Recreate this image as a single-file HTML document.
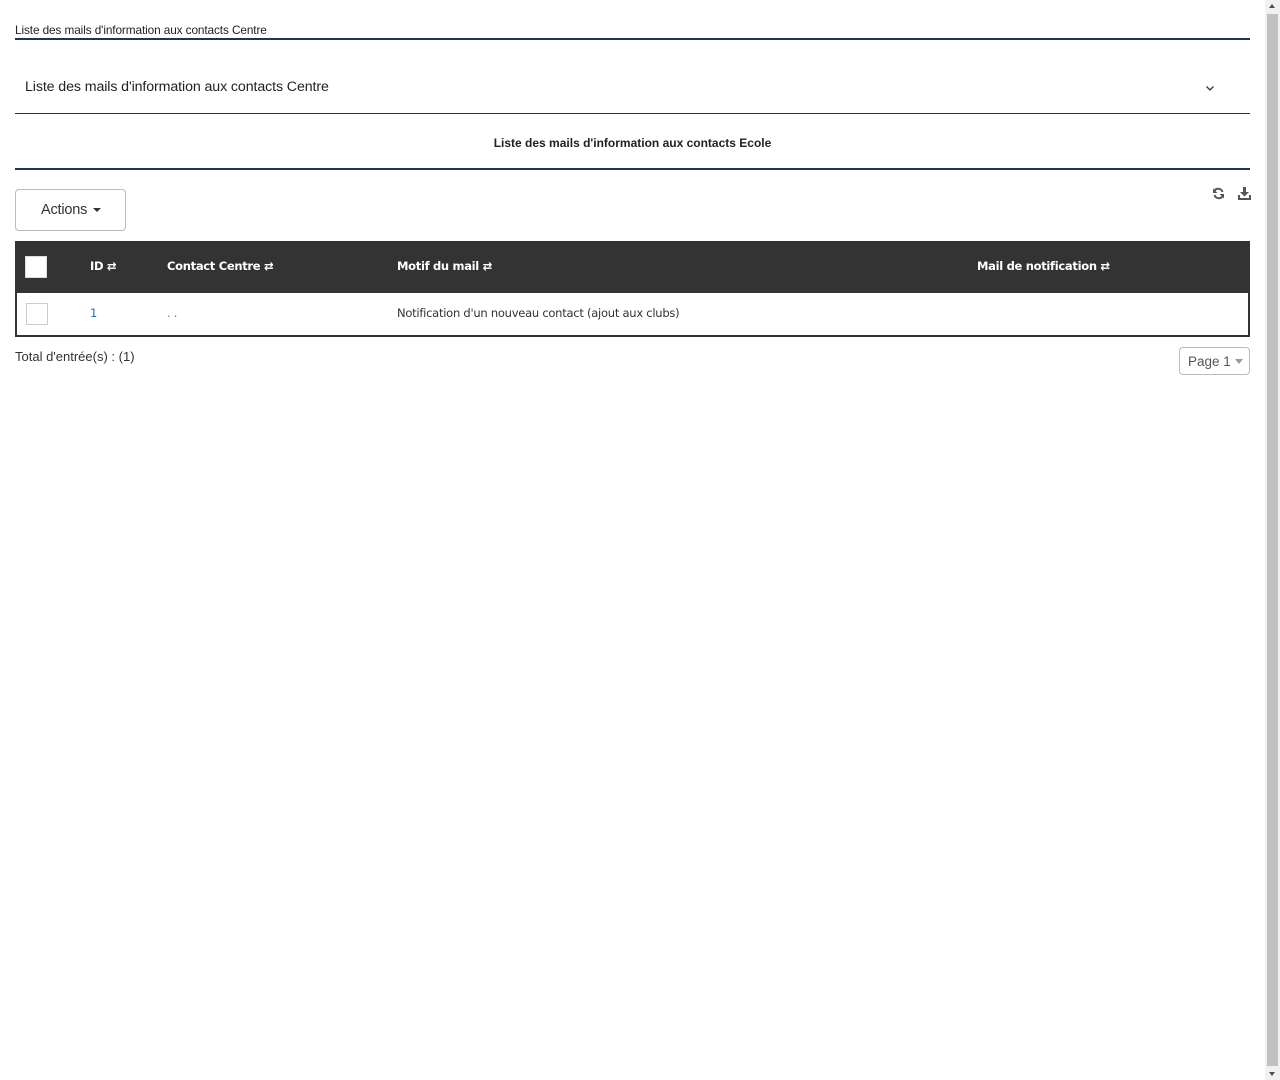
<!DOCTYPE html>
<html><head><meta charset="utf-8"><style>
*{box-sizing:border-box}
body{margin:0;width:1280px;height:1080px;background:#fff;font-family:"Liberation Sans",sans-serif;color:#333;position:relative;overflow:hidden}
.sb{position:absolute;left:1265px;top:0;width:15px;height:1080px;background:#f1f1f1}
.sb .th{position:absolute;left:2px;top:14px;width:11px;height:1052px;background:#c1c1c1}
.sb .a1,.sb .a2{position:absolute;left:4px;width:0;height:0;border-left:3.5px solid transparent;border-right:3.5px solid transparent}
.sb .a1{top:4px;border-bottom:4px solid #505050}
.sb .a2{bottom:4px;border-top:4px solid #505050}
.t1{position:absolute;left:15px;top:23px;font-size:11.8px;color:#222;letter-spacing:-0.1px}
.l1{position:absolute;left:15px;top:38px;width:1235px;height:2px;background:#1d3557}
.acc{position:absolute;left:25px;top:79px;font-size:14.2px;color:#222;letter-spacing:-0.1px}
.chev{position:absolute;left:1205px;top:84px}
.l2{position:absolute;left:15px;top:113px;width:1235px;height:1px;background:#333}
.t2{position:absolute;left:0;width:1265px;top:136px;text-align:center;font-size:12px;font-weight:bold;color:#222}
.l3{position:absolute;left:15px;top:168px;width:1235px;height:2px;background:#1d3557}
.btn{position:absolute;left:15px;top:189px;width:111px;height:42px;border:1px solid #bbb;border-radius:4px;font-size:14.5px;color:#333;padding:12px 0 0 25px;letter-spacing:-0.2px}
.btn .c{display:inline-block;width:0;height:0;border-left:4px solid transparent;border-right:4px solid transparent;border-top:4px solid #333;vertical-align:middle;margin-left:2px}
.tbl{position:absolute;left:15px;top:241px;width:1235px;height:96px;border:2px solid #333;border-top:0}
.hd{position:absolute;left:15px;top:241px;width:1235px;height:52px;background:#333}
.hd span{position:absolute;top:18px;color:#fff;font-family:"DejaVu Sans",sans-serif;font-size:11.5px;font-weight:bold;letter-spacing:-0.3px}
.cb{position:absolute;width:22px;height:22px;background:#fff;border:1px solid #ccc}
.row span{position:absolute;top:306px;font-family:"DejaVu Sans",sans-serif;font-size:11.5px;color:#333;letter-spacing:-0.25px}
.tot{position:absolute;left:15px;top:349px;font-size:13px;color:#333}
.pg{position:absolute;left:1179px;top:347px;width:71px;height:28px;border:1px solid #bbb;border-radius:4px;font-size:13.5px;color:#555;padding:6px 0 0 8px}
.pg .c{position:absolute;right:6px;top:11px;width:0;height:0;border-left:4px solid transparent;border-right:4px solid transparent;border-top:5px solid #999}
</style></head><body>
<div class="t1">Liste des mails d'information aux contacts Centre</div>
<div class="l1"></div>
<div class="acc">Liste des mails d'information aux contacts Centre</div>
<svg class="chev" width="10" height="8" viewBox="0 0 10 8"><path d="M1.5 2.5 L5 6 L8.5 2.5" fill="none" stroke="#333" stroke-width="1.3"/></svg>
<div class="l2"></div>
<div class="t2">Liste des mails d'information aux contacts Ecole</div>
<div class="l3"></div>
<div class="btn">Actions <span class="c"></span></div>
<svg style="position:absolute;left:1212px;top:187px" width="13" height="13" viewBox="0 0 13 13"><path d="M10.5 5 A4.5 4.5 0 0 0 2.3 4" fill="none" stroke="#555" stroke-width="2"/><path d="M1 1.5 L1 6 L5.5 6Z" fill="#555"/><path d="M2.5 8 A4.5 4.5 0 0 0 10.7 9" fill="none" stroke="#555" stroke-width="2"/><path d="M12 11.5 L12 7 L7.5 7Z" fill="#555"/></svg>
<svg style="position:absolute;left:1238px;top:187px" width="13" height="13" viewBox="0 0 13 13"><path d="M5 0h3v5h3l-4.5 4.5L2 5h3z" fill="#555"/><path d="M0 8h2v3h9V8h2v5H0z" fill="#555"/></svg>
<div class="tbl"></div>
<div class="hd">
<div class="cb" style="left:10px;top:15px;border-color:#ddd"></div>
<span style="left:75px">ID ⇄</span>
<span style="left:152px">Contact Centre ⇄</span>
<span style="left:382px">Motif du mail ⇄</span>
<span style="left:962px">Mail de notification ⇄</span>
</div>
<div class="cb" style="left:26px;top:303px"></div>
<div class="row">
<span style="left:90px;color:#2a6ebb">1</span>
<span style="left:167px;color:#c06030">. .</span>
<span style="left:397px">Notification d'un nouveau contact (ajout aux clubs)</span>
</div>
<div class="tot">Total d'entrée(s) : (1)</div>
<div class="pg">Page 1<span class="c"></span></div>
<div class="sb"><div class="a1"></div><div class="th"></div><div class="a2"></div></div>
</body></html>
